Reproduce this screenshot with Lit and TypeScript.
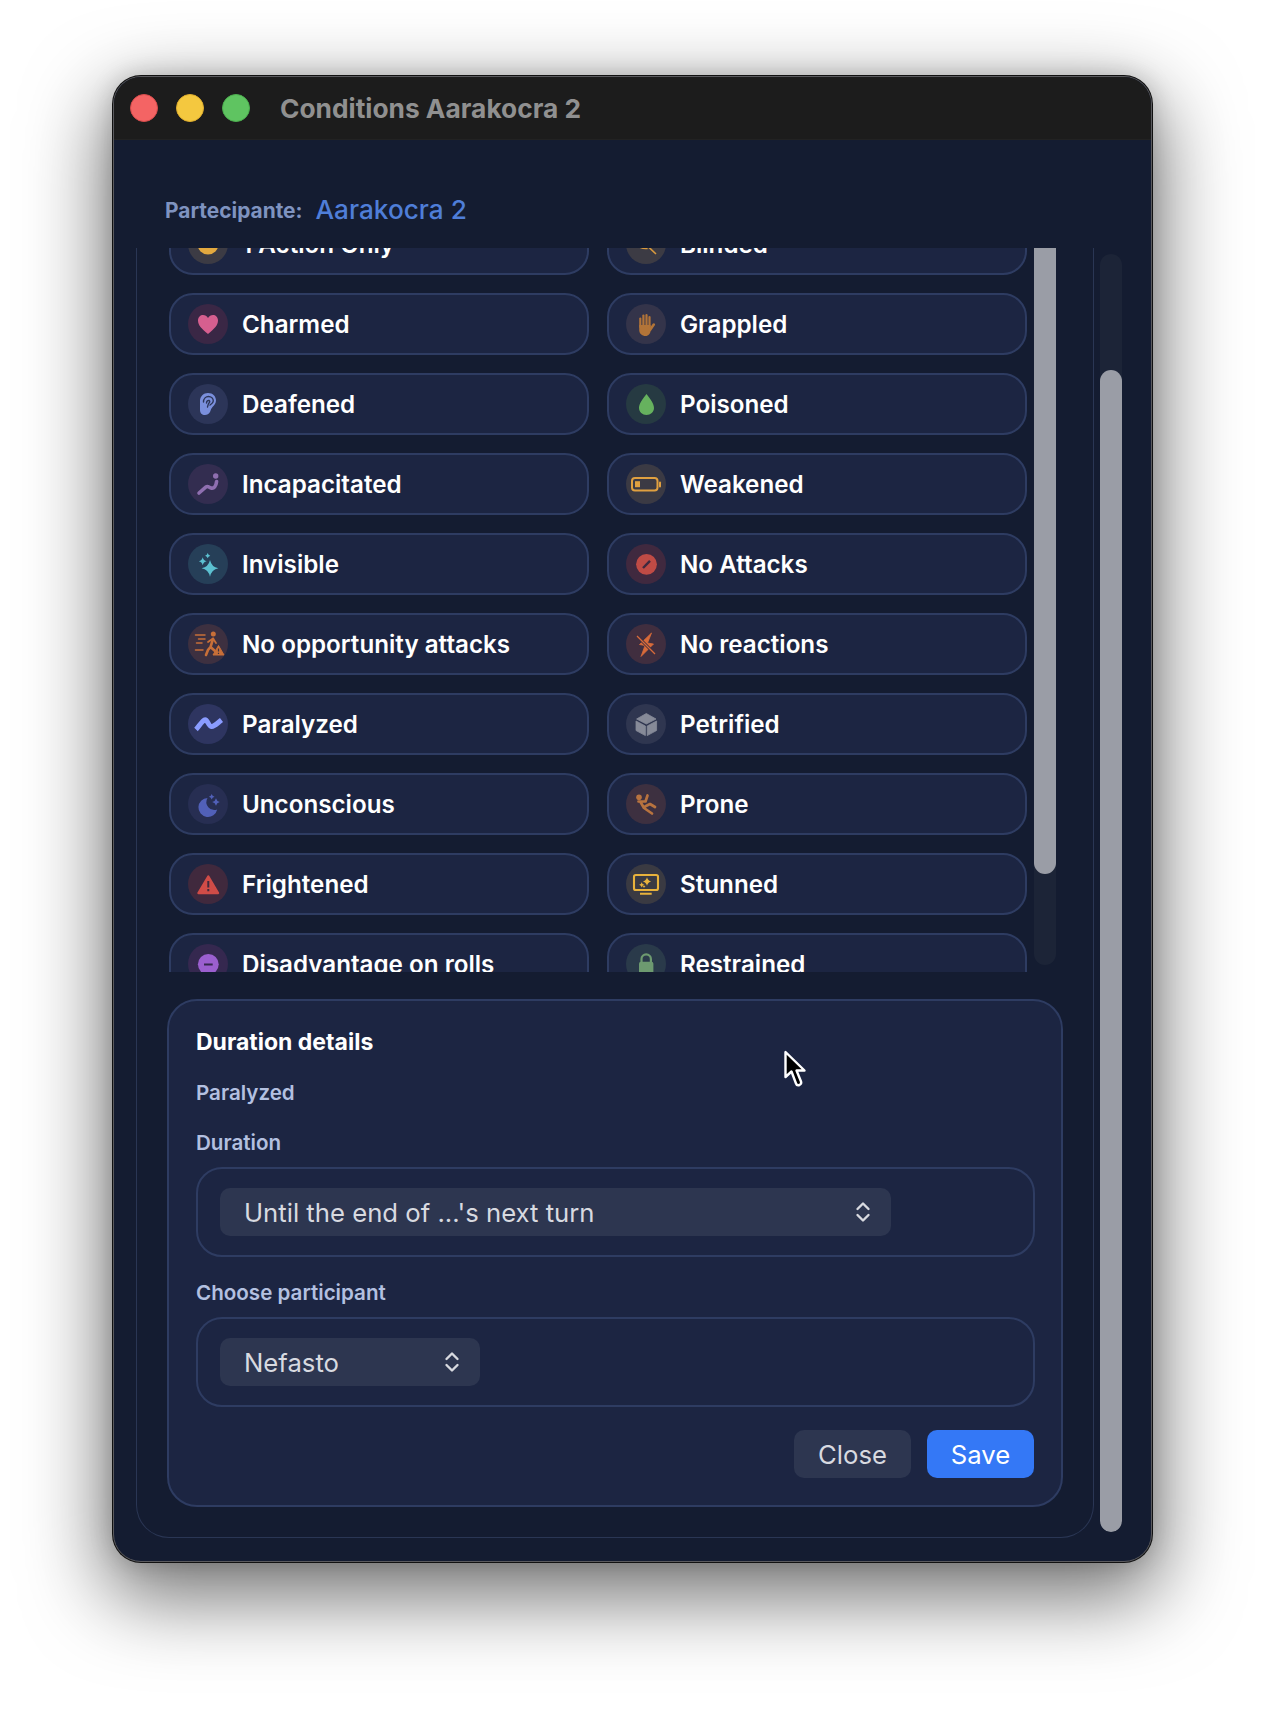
import { LitElement, html, css, svg } from "lit";
import { customElement } from "lit/decorators.js";

const star = (cx: number, cy: number, r: number, k = 0.18) => {
  const c = r * k;
  return `M${cx} ${cy - r}Q${cx + c} ${cy - c} ${cx + r} ${cy}Q${cx + c} ${cy + c} ${cx} ${cy + r}Q${cx - c} ${cy + c} ${cx - r} ${cy}Q${cx - c} ${cy - c} ${cx} ${cy - r}Z`;
};

type Cond = { name: string; bg: string; color: string; icon: unknown };

const ICONS: Record<string, Cond> = {
  action: { name: "1 Action Only", bg: "#3c3b44", color: "#e3a93f", icon: svg`<circle cx="20" cy="20" r="10.5" fill="currentColor"/>` },
  blinded: { name: "Blinded", bg: "#3c3b44", color: "#d99a3e", icon: svg`<path d="M9 20C13 14 27 14 31 20C27 27 13 27 9 20Z" fill="currentColor"/><path d="M12 13L30 30" stroke="#3c3b44" stroke-width="3.5"/><path d="M12 13L30 30" stroke="currentColor" stroke-width="1.6"/>` },
  charmed: { name: "Charmed", bg: "#3a2745", color: "#d65f8f", icon: svg`<path d="M20 30C14 25 10 21.5 10 16.5C10 13 12.5 11 15 11C17 11 19 12 20 14C21 12 23 11 25 11C27.5 11 30 13 30 16.5C30 21.5 26 25 20 30Z" fill="currentColor"/>` },
  grappled: { name: "Grappled", bg: "#34344a", color: "#b27438", icon: svg`<g stroke="currentColor" stroke-width="2.2" stroke-linecap="round"><path d="M14.3 14.5V23"/><path d="M17.4 11.5V22"/><path d="M20.5 11V22"/><path d="M23.5 13V23"/><path d="M24 26L27.8 20.5" stroke-width="2.6"/></g><path d="M13.2 21H24.6V26C24.6 29.5 22.5 32 19.5 32C16 32 13.2 29.5 13.2 26Z" fill="currentColor"/>` },
  deafened: { name: "Deafened", bg: "#2c3558", color: "#7a8fdc", icon: svg`<path d="M20 9C25 9 28 12.5 28 16.5C28 19.5 26 21.5 24.5 23C23 24.5 23 26 22 28C21 30 19 31 17 31C14 31 12 29 12 26V17C12 12.5 15.5 9 20 9Z" fill="currentColor"/><path d="M15.5 18C15.5 14.5 18 12.5 20.5 12.5C23.2 12.5 25.3 14.5 25.3 17C25.3 19 23.5 20 22 21M18.5 19C18.5 17 20 16.2 21 16.5C22 17 22 18 21 19C20 20 20 21.5 19.5 23" fill="none" stroke="#2c3558" stroke-width="1.4" stroke-linecap="round"/>` },
  poisoned: { name: "Poisoned", bg: "#263a42", color: "#66b25e", icon: svg`<path d="M20.5 10C24 15 28 19 28 24C28 28 24.5 31 20.5 31C16.5 31 13 28 13 24C13 19 17 15 20.5 10Z" fill="currentColor"/>` },
  incap: { name: "Incapacitated", bg: "#332d50", color: "#8f6fb0", icon: svg`<circle cx="27.7" cy="12" r="2.7" fill="currentColor"/><path d="M11 29L18 23C20 21.5 20.5 23.3 23 24C26 24.8 28 22.5 28.6 17.5" fill="none" stroke="currentColor" stroke-width="3.6" stroke-linecap="round"/>` },
  weakened: { name: "Weakened", bg: "#3b3a44", color: "#e0a040", icon: svg`<rect x="6" y="14" width="25.5" height="12.5" rx="3" fill="none" stroke="currentColor" stroke-width="2"/><rect x="9" y="17.2" width="5" height="6" fill="currentColor"/><rect x="33" y="17.5" width="2" height="6" rx="1" fill="currentColor"/>` },
  invisible: { name: "Invisible", bg: "#263f58", color: "#5cc0d0", icon: svg`<g fill="currentColor"><path d="${star(22, 24.3, 8.4)}"/><path d="${star(14.7, 17.3, 4)}"/><path d="${star(19.7, 11.7, 2.6)}"/></g>` },
  noattacks: { name: "No Attacks", bg: "#40293f", color: "#c04b45", icon: svg`<circle cx="20.5" cy="20.3" r="10.4" fill="currentColor"/><path d="M17 24L24 16.8" stroke="#40293f" stroke-width="2.4"/>` },
  noopp: { name: "No opportunity attacks", bg: "#3d3040", color: "#c86f38", icon: svg`<g stroke="currentColor" stroke-width="1.5" stroke-linecap="round" fill="none"><path d="M7.5 11H17M10.5 15H17M8.5 19H14M7.5 26H15"/><path d="M25 15L22.5 23L27 27M22.5 23L20 26L18 31" stroke-width="2.6"/><path d="M20 18L25 14.5L28 19" stroke-width="1.8"/></g><circle cx="25.3" cy="10" r="2.5" fill="currentColor"/><path d="M30.5 21.5L36 31H25Z" fill="currentColor" stroke="currentColor" stroke-linejoin="round"/><path d="M30.5 24.6V27.6M30.5 28.8V30" stroke="#3d3040" stroke-width="1.2"/>` },
  noreact: { name: "No reactions", bg: "#402e3f", color: "#d86b3a", icon: svg`<path d="M25.5 9L13.5 20.5L19 21.5L15 32.5L27.5 20L21.5 19Z" fill="currentColor" stroke="currentColor" stroke-width=".8" stroke-linejoin="round"/><path d="M11 12L29 30" stroke="#402e3f" stroke-width="3"/><path d="M11 12L29 30" stroke="currentColor" stroke-width="1.3"/>` },
  paralyzed: { name: "Paralyzed", bg: "#2e3560", color: "#8a9cff", icon: svg`<path d="M8 25.5C11 22.5 14 17 16.8 15.8C19.5 15 20.5 22.7 23.7 22.5C26.5 22.3 29 19.5 33.5 16" fill="none" stroke="currentColor" stroke-width="5" stroke-linecap="butt" stroke-linejoin="round"/>` },
  petrified: { name: "Petrified", bg: "#2f3650", color: "#868a98", icon: svg`<g fill="currentColor" stroke="currentColor" stroke-width=".8" stroke-linejoin="round"><path d="M20.3 9.5L30 15L20.3 20L10.6 15Z"/><path d="M10 17L19.4 22V31.6L10 26.5Z"/><path d="M21.2 22L30.6 17V26.5L21.2 31.6Z"/></g>` },
  unconscious: { name: "Unconscious", bg: "#272e52", color: "#5160b8", icon: svg`<g fill="currentColor"><path d="M19.5 14A9.5 9.5 0 1 0 29.2 25.5A8 8 0 0 1 19.5 14Z"/><path d="${star(23.7, 12.7, 2.8)}"/><path d="${star(28, 18, 3.8)}"/></g>` },
  prone: { name: "Prone", bg: "#3d3040", color: "#b8733f", icon: svg`<circle cx="13" cy="13.3" r="2.8" fill="currentColor"/><path d="M21.5 11.5L19.5 17.5L12.5 17.5M14.5 18L18 24L26 29.5M19 22.5L24 20L29 23" fill="none" stroke="currentColor" stroke-width="2.7" stroke-linecap="round" stroke-linejoin="round"/>` },
  frightened: { name: "Frightened", bg: "#40293d", color: "#d04c47", icon: svg`<path d="M20.3 12.5L30 29H10.5Z" fill="currentColor" stroke="currentColor" stroke-width="2.4" stroke-linejoin="round"/><path d="M20.3 17V23.5M20.3 25V27.2" stroke="#40293d" stroke-width="2"/>` },
  stunned: { name: "Stunned", bg: "#3a3a42", color: "#e8b23c", icon: svg`<rect x="8" y="11" width="24" height="15" rx="1.8" fill="none" stroke="currentColor" stroke-width="2.1"/><path d="M14 29.8H25.7" stroke="currentColor" stroke-width="2"/><g fill="currentColor"><path d="${star(21, 17.5, 4.3)}"/><path d="${star(15.7, 20.8, 2.6)}"/><path d="${star(18, 22.5, 1.6)}"/></g>` },
  disadvantage: { name: "Disadvantage on rolls", bg: "#35284f", color: "#9b5fcf", icon: svg`<circle cx="20.3" cy="20.3" r="10.4" fill="currentColor"/><path d="M16 20.5H24.7" stroke="#35284f" stroke-width="2.2"/>` },
  restrained: { name: "Restrained", bg: "#2a3a4a", color: "#6d9a70", icon: svg`<rect x="13" y="17.7" width="14.4" height="14" rx="2" fill="currentColor"/><path d="M15.5 18V15A4.7 4.7 0 0 1 24.9 15V18" fill="none" stroke="currentColor" stroke-width="2.2"/>` },
};

const ROWS = [
  "action", "blinded", "charmed", "grappled", "deafened", "poisoned", "incap", "weakened",
  "invisible", "noattacks", "noopp", "noreact", "paralyzed", "petrified", "unconscious", "prone",
  "frightened", "stunned", "disadvantage", "restrained",
];

const chevrons = html`<svg class="chev" width="16" height="22" viewBox="0 0 16 22" fill="none" stroke="currentColor" stroke-width="2.4" stroke-linecap="round" stroke-linejoin="round"><path d="M2.5 8L8 2.5L13.5 8"/><path d="M2.5 14L8 19.5L13.5 14"/></svg>`;

@customElement("app-root")
export class AppRoot extends LitElement {
  static styles = css`
    :host { display: block; height: 1710px; background: #fff; overflow: hidden; font-family: Inter, "Liberation Sans", sans-serif; }
    .page { padding: 76px 0 0 113px; position: relative; }
    .window { width: 1039px; height: 1486px; box-sizing: border-box; border-radius: 28px; overflow: hidden; display: flex; flex-direction: column; background: #141c31; border: 1px solid #5a5a5e; box-shadow: 0 0 0 1px #111, 0 28px 80px 8px rgba(0, 0, 0, .55), 0 0 24px rgba(0, 0, 0, .18); }
    .titlebar { height: 62px; flex: none; background: #1c1c1c; border-bottom: 1px solid #222; display: flex; align-items: center; padding-left: 16px; }
    .dot { width: 28px; height: 28px; border-radius: 50%; margin-right: 18px; box-sizing: border-box; }
    .red { background: #f46464; border: 1px solid #d84c4c; }
    .yellow { background: #f4c83f; border: 1px solid #dfae2e; }
    .green { background: #5fc461; border: 1px solid #4cae4f; }
    .title { font-size: 26.3px; font-weight: 650; color: #909090; margin-left: 12px; }
    .head { height: 108px; flex: none; box-sizing: border-box; padding: 0 0 22px 51px; display: flex; align-items: flex-end; gap: 13px; }
    .head .lbl { font-size: 20.9px; font-weight: 650; color: #7f93c0; line-height: 30px; }
    .head .who { font-size: 26.2px; font-weight: 550; color: #4f7ed8; line-height: 30px; margin-bottom: 1px; }
    .main { flex: 1; display: flex; min-height: 0; padding-left: 22px; position: relative; }
    .panel { width: 958px; height: 1290px; box-sizing: border-box; border: 1px solid #2a3654; border-top: 0; border-radius: 0 0 33px 33px; display: flex; flex-direction: column; }
    .listwrap { height: 724px; flex: none; overflow: hidden; display: flex; padding-left: 32px; }
    .grid { width: 858px; margin-top: -35px; display: grid; grid-template-columns: 420px 420px; column-gap: 18px; row-gap: 18px; align-content: start; }
    .row { height: 62px; box-sizing: border-box; background: #1c2542; border: 2px solid #2e3c62; border-radius: 24px; display: flex; align-items: center; padding-left: 17px; gap: 14px; }
    .ic { width: 40px; height: 40px; border-radius: 50%; flex: none; display: block; }
    .row span { font-size: 24.2px; font-weight: 640; color: #fff; white-space: nowrap; }
    .sb { width: 22px; margin-left: 7px; margin-top: -20px; height: 737px; background: #1c2437; border-radius: 0 0 11px 11px; overflow: hidden; flex: none; }
    .sb div { height: 646px; background: #9a9da6; border-radius: 0 0 11px 11px; }
    .card { margin: 27px 0 0 30px; width: 896px; height: 508px; box-sizing: border-box; background: #1c2542; border: 2px solid #2e3c62; border-radius: 30px; padding: 26px 26px 0 27px; display: flex; flex-direction: column; }
    .card h2 { margin: 0; font-size: 23px; line-height: 30px; font-weight: 700; color: #fff; }
    .sub { font-size: 20.6px; line-height: 26px; font-weight: 620; color: #b3c0e0; margin-top: 23px; }
    .sub.f { margin-top: 24px; }
    .box { height: 90px; box-sizing: border-box; border: 2px solid #2e3c62; border-radius: 26px; margin-top: 11px; padding: 19px 22px; flex: none; }
    .box + .sub { margin-top: 23px; }
    .select { height: 48px; box-sizing: border-box; background: #2d3650; border-radius: 10px; display: flex; align-items: center; justify-content: space-between; padding: 0 20px 0 24px; font-size: 25.7px; color: #d8dae0; }
    .select.long { width: 671px; }
    .select.short { width: 260px; }
    .chev { color: #d8dae0; display: block; }
    .actions { display: flex; justify-content: flex-end; gap: 16px; margin: 23px 1px 0 0; }
    button { height: 48px; border: 0; border-radius: 10px; font: 400 25.7px Inter, "Liberation Sans", sans-serif; padding: 0; }
    .close { width: 117px; background: #2d3650; color: #d8dae0; }
    .save { width: 107px; background: #3478f6; color: #fff; }
    .osb { position: absolute; left: 986px; top: 6px; width: 22px; height: 1278px; border-radius: 11px; background: #1c2437; overflow: hidden; }
    .osb div { margin-top: 116px; height: 1162px; background: #9a9da6; border-radius: 11px; }
    .cursor { position: absolute; left: 783px; top: 1050px; }
  `;

  render() {
    return html`<div class="page">
      <div class="window">
        <div class="titlebar">
          <div class="dot red"></div><div class="dot yellow"></div><div class="dot green"></div>
          <div class="title">Conditions Aarakocra 2</div>
        </div>
        <div class="head"><span class="lbl">Partecipante:</span><span class="who">Aarakocra 2</span></div>
        <div class="main">
          <div class="panel">
            <div class="listwrap">
              <div class="grid">
                ${ROWS.map((k) => {
                  const c = ICONS[k];
                  return html`<div class="row">
                    <svg class="ic" viewBox="0 0 40 40" style="background:${c.bg};color:${c.color}">${c.icon}</svg>
                    <span>${c.name}</span>
                  </div>`;
                })}
              </div>
              <div class="sb"><div></div></div>
            </div>
            <div class="card">
              <h2>Duration details</h2>
              <div class="sub">Paralyzed</div>
              <div class="sub f">Duration</div>
              <div class="box"><div class="select long"><span>Until the end of ...'s next turn</span>${chevrons}</div></div>
              <div class="sub">Choose participant</div>
              <div class="box"><div class="select short"><span>Nefasto</span>${chevrons}</div></div>
              <div class="actions"><button class="close">Close</button><button class="save">Save</button></div>
            </div>
          </div>
          <div class="osb"><div></div></div>
        </div>
      </div>
      <svg class="cursor" width="24" height="38" viewBox="0 0 24 38"><path d="M2.5 2V27L8.5 21.5L13 33.5C13.5 35 15 35.5 16.5 35C18 34.3 18.5 33 18 31.5L13.5 20.5H21.5Z" fill="#000" stroke="#fff" stroke-width="2.4" stroke-linejoin="round"/></svg>
    </div>`;
  }
}
